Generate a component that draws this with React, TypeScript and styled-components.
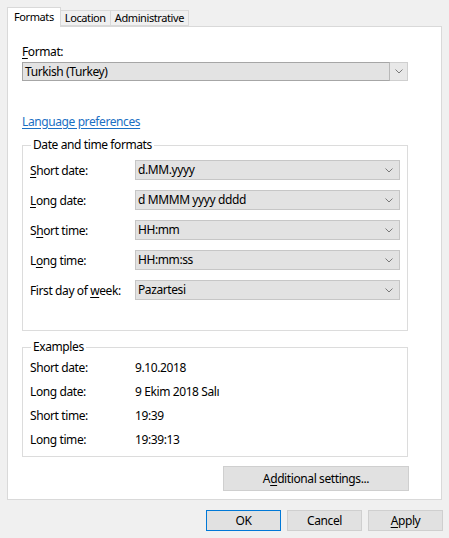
import React from "react";
import styled, { createGlobalStyle } from "styled-components";

const Global = createGlobalStyle`
  html, body { margin: 0; padding: 0; background: #f0f0f0; }
  body {
    font-family: "Noto Sans", "Open Sans", "Liberation Sans", sans-serif;
    font-size: 12px;
    letter-spacing: -0.4px;
    color: #000;
  }
  * { box-sizing: border-box; }
`;

const Window = styled.div`
  width: 449px;
  height: 538px;
  padding: 7px 7px 0 7px;
  display: flex;
  flex-direction: column;
`;

const TabStrip = styled.div`
  display: flex;
  align-items: flex-end;
  height: 19px;
  position: relative;
  z-index: 1;
`;

const Tab = styled.div<{ $active?: boolean }>`
  height: ${(p) => (p.$active ? "20px" : "16px")};
  margin-bottom: ${(p) => (p.$active ? "-1px" : "0")};
  padding: 0 ${(p) => (p.$active ? "6px" : "4px")} ${(p) => (p.$active ? "2px" : "0")};
  background: ${(p) => (p.$active ? "#ffffff" : "#f0f0f0")};
  border: 1px solid #d9d9d9;
  border-bottom: ${(p) => (p.$active ? "none" : "1px solid #d9d9d9")};
  margin-left: ${(p) => (p.$active ? "0" : "-1px")};
  display: flex;
  align-items: center;
  font-size: 11px;
  letter-spacing: -0.4px;
  line-height: 14px;
  white-space: nowrap;
`;

const Panel = styled.div`
  height: 474px;
  background: #ffffff;
  border: 1px solid #d9d9d9;
  padding: 17px 33px 0 14px;
  display: flex;
  flex-direction: column;
`;

const Label = styled.div`
  line-height: 16px;
  height: 16px;
`;

const U = styled.span`
  text-decoration: underline;
  text-underline-offset: 2px;
`;

const FormatCombo = styled.div`
  margin-top: 2px;
  height: 19px;
  display: flex;
`;

const FormatField = styled.div`
  flex: 1;
  background: #e3e3e3;
  border: 1px solid #a6a6a6;
  border-right: 1px solid #b8b8b8;
  display: flex;
  align-items: center;
  padding-left: 2px;
  line-height: 16px;
`;

const FormatButton = styled.div`
  width: 18px;
  background: #e8e8e8;
  border: 1px solid #cfcfcf;
  border-left: none;
  display: flex;
  align-items: center;
  justify-content: center;
`;

const Link = styled.a`
  margin-top: 33px;
  line-height: 16px;
  color: #1a6fc4;
  text-decoration: underline;
  text-underline-offset: 2px;
  align-self: flex-start;
`;

const Group = styled.fieldset<{ $gap: number; $pb: number }>`
  margin: ${(p) => p.$gap}px 0 0 0;
  padding: 0 7px ${(p) => p.$pb}px 7px;
  border: 1px solid #dcdcdc;
  min-width: 0;
`;

const Legend = styled.legend`
  padding: 0 2px;
  margin-left: 1px;
  line-height: 16px;
`;

const FormRows = styled.div`
  display: flex;
  flex-direction: column;
  gap: 10px;
  padding-top: 7px;
`;

const FormRow = styled.div`
  display: grid;
  grid-template-columns: 105px 1fr;
  align-items: center;
  height: 20px;
`;

const Combo = styled.div`
  height: 20px;
  background: #e2e2e2;
  border: 1px solid #c6c6c6;
  display: flex;
  align-items: center;
  justify-content: space-between;
  padding: 0 6px 0 2px;
  line-height: 16px;
`;

const ExampleRow = styled.div`
  display: grid;
  grid-template-columns: 105px 1fr;
  align-items: center;
  height: 24px;
`;

const ButtonBase = styled.div<{ $default?: boolean }>`
  background: #e1e1e1;
  border: 1px solid ${(p) => (p.$default ? "#0078d7" : "#cfcfcf")};
  display: flex;
  align-items: center;
  justify-content: center;
  line-height: 16px;
`;

const AdditionalButton = styled(ButtonBase)`
  margin-top: 9px;
  align-self: flex-end;
  width: 186px;
  height: 25px;
  margin-right: -1px;
`;

const Footer = styled.div`
  display: flex;
  justify-content: flex-end;
  gap: 6px;
  padding: 10px 6px 0 0;
  margin-right: -7px;
`;

const DialogButton = styled(ButtonBase)`
  width: 75px;
  height: 21px;
`;

const Chevron = () => (
  <svg width="8" height="5" viewBox="0 0 8 5">
    <path d="M0.5 0.5 L4 4 L7.5 0.5" fill="none" stroke="#7a7a7a" strokeWidth="1" />
  </svg>
);

const formats: { label: React.ReactNode; value: string }[] = [
  { label: <><U>S</U>hort date:</>, value: "d.MM.yyyy" },
  { label: <><U>L</U>ong date:</>, value: "d MMMM yyyy dddd" },
  { label: <>S<U>h</U>ort time:</>, value: "HH:mm" },
  { label: <>L<U>o</U>ng time:</>, value: "HH:mm:ss" },
  { label: <>First day of <U>w</U>eek:</>, value: "Pazartesi" },
];

const examples = [
  ["Short date:", "9.10.2018"],
  ["Long date:", "9 Ekim 2018 Salı"],
  ["Short time:", "19:39"],
  ["Long time:", "19:39:13"],
];

export default function App() {
  return (
    <>
      <Global />
      <Window>
        <TabStrip>
          <Tab $active>Formats</Tab>
          <Tab>Location</Tab>
          <Tab>Administrative</Tab>
        </TabStrip>
        <Panel>
          <Label>
            <U>F</U>ormat:
          </Label>
          <FormatCombo>
            <FormatField>Turkish (Turkey)</FormatField>
            <FormatButton>
              <Chevron />
            </FormatButton>
          </FormatCombo>
          <Link>Language preferences</Link>
          <Group $gap={7} $pb={30}>
            <Legend>Date and time formats</Legend>
            <FormRows>
              {formats.map((f, i) => (
                <FormRow key={i}>
                  <span>{f.label}</span>
                  <Combo>
                    <span>{f.value}</span>
                    <Chevron />
                  </Combo>
                </FormRow>
              ))}
            </FormRows>
          </Group>
          <Group $gap={8} $pb={5}>
            <Legend>Examples</Legend>
            {examples.map(([k, v]) => (
              <ExampleRow key={k}>
                <span>{k}</span>
                <span>{v}</span>
              </ExampleRow>
            ))}
          </Group>
          <AdditionalButton>
            <span>
              A<U>d</U>ditional settings...
            </span>
          </AdditionalButton>
        </Panel>
        <Footer>
          <DialogButton $default>OK</DialogButton>
          <DialogButton>Cancel</DialogButton>
          <DialogButton>
            <span>
              <U>A</U>pply
            </span>
          </DialogButton>
        </Footer>
      </Window>
    </>
  );
}
